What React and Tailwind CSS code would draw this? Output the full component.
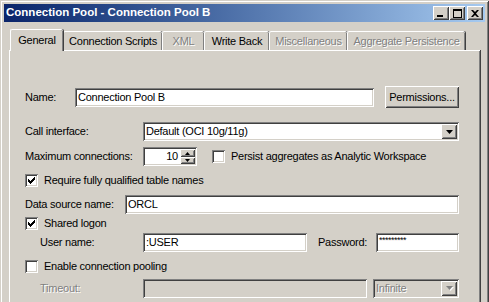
import React from 'react';

// bevels in the classic Windows style
const sunken = "shadow-[inset_1px_1px_0_#808080,inset_-1px_-1px_0_#ffffff,inset_2px_2px_0_#404040,inset_-2px_-2px_0_#d4d0c8]";
const raised = "shadow-[inset_1px_1px_0_#ffffff,inset_-1px_-1px_0_#404040,inset_2px_2px_0_#d4d0c8,inset_-2px_-2px_0_#808080]";
const grayText = "text-[#808080] [text-shadow:1px_1px_0_#ffffff]";

const Arrow = ({ disabled }) => (
  <svg width="7" height="4" viewBox="0 0 7 4" className="overflow-visible">
    {disabled && <polygon points="1,1 8,1 4.5,5" fill="#ffffff" />}
    <polygon points="0,0 7,0 3.5,4" fill={disabled ? "#808080" : "#000000"} />
  </svg>
);

const DropButton = ({ disabled }) => (
  <div className={`w-[16px] h-[15px] bg-[#d4d0c8] flex items-center justify-center ${raised}`}>
    <Arrow disabled={disabled} />
  </div>
);

const Field = ({ w, children, disabled, className = "" }) => (
  <div className={`${w} h-[19px] ${disabled ? "bg-[#d4d0c8]" : "bg-white"} ${sunken} flex items-center pl-[3px] shrink-0 ${className}`}>
    {children}
  </div>
);

const Select = ({ w, value, disabled }) => (
  <div className={`${w} h-[19px] ${disabled ? "bg-[#d4d0c8]" : "bg-white"} ${sunken} flex items-center pl-[3px] pr-[2px] shrink-0`}>
    <span className={`flex-1 ${disabled ? grayText : ""}`}>{value}</span>
    <DropButton disabled={disabled} />
  </div>
);

const Checkbox = ({ checked }) => (
  <div className={`w-[13px] h-[13px] bg-white ${sunken} shrink-0 flex items-center justify-center`}>
    {checked && (
      <svg width="7" height="7" viewBox="0 0 7 7">
        <path d="M0 2h1v1h1v1h1v-1h1v-1h1v-1h1v-1h1v3h-1v1h-1v1h-1v1h-1v1h-1v-1h-1v-1h-1v-1h-1z" fill="#000" />
      </svg>
    )}
  </div>
);

const TitleButton = ({ children }) => (
  <div className={`w-[16px] h-[14px] bg-[#d4d0c8] ${raised} flex items-center justify-center`}>
    {children}
  </div>
);

const Tab = ({ w, label, selected, disabled }) => (
  <div
    className={`${w} shrink-0 flex items-center justify-center bg-[#d4d0c8] border-t border-l border-white rounded-t-[2px] shadow-[1px_0_0_#404040,inset_-1px_0_0_#808080] ${
      selected ? "h-[22px] relative z-10 -mb-[1px] pb-[1px]" : "h-[19px] pt-[1px]"
    } ${disabled ? grayText : "text-black"}`}
  >
    {label}
  </div>
);

const tabs = [
  { label: "General", w: "w-[53px]", selected: true },
  { label: "Connection Scripts", w: "w-[99px]" },
  { label: "XML", w: "w-[42px]", disabled: true },
  { label: "Write Back", w: "w-[65px]" },
  { label: "Miscellaneous", w: "w-[78px]", disabled: true },
  { label: "Aggregate Persistence", w: "w-[118px]", disabled: true },
];

export default function App() {
  return (
    <div className="w-[489px] h-[302px] overflow-hidden bg-[#d4d0c8] font-['Liberation_Sans',Arial,sans-serif] text-[11px] tracking-[-0.25px] text-black leading-none">
      {/* fenêtre */}
      <div className="w-[489px] h-[320px] px-[4px] pt-[4px] shadow-[inset_1px_1px_0_#d4d0c8,inset_-1px_-1px_0_#404040,inset_2px_2px_0_#ffffff,inset_-2px_-2px_0_#808080]">
        {/* barre de titre */}
        <div className="h-[18px] bg-linear-to-r from-[#0a246a] to-[#a6caf0] flex items-center pl-[2px] pr-[2px]">
          <span className="flex-1 text-white font-bold text-[11.5px] tracking-normal">Connection Pool - Connection Pool B</span>
          <div className="flex items-center">
            <TitleButton>
              <div className="w-[6px] h-[2px] bg-black mt-[6px] -ml-[2px]" />
            </TitleButton>
            <TitleButton>
              <div className="w-[9px] h-[9px] border border-black border-t-2" />
            </TitleButton>
            <div className="ml-[2px]">
              <TitleButton>
                <svg width="8" height="7" viewBox="0 0 8 7">
                  <path d="M0 0h2l2 2 2-2h2l-3 3.5 3 3.5h-2l-2-2-2 2h-2l3-3.5z" fill="#000" />
                </svg>
              </TitleButton>
            </div>
          </div>
        </div>

        {/* onglets */}
        <div className="mt-[7px] h-[21px] flex items-end pl-[6px]">
          {tabs.map((t) => (
            <Tab key={t.label} {...t} />
          ))}
        </div>

        {/* panneau */}
        <div className="ml-[5px] w-[471px] h-[300px] border-t border-l border-white shadow-[1px_0_0_#404040,inset_-1px_0_0_#808080] pl-[15px] pt-[35px]">
          {/* Name */}
          <div className="flex items-center h-[22px]">
            <span className="w-[50px]">Name:</span>
            <Field w="w-[299px]">Connection Pool B</Field>
            <div className={`ml-[11px] w-[74px] h-[22px] ${raised} flex items-center justify-center`}>
              Permissions...
            </div>
          </div>

          {/* Call interface */}
          <div className="flex items-center h-[19px] mt-[14px]">
            <span className="w-[118px]">Call interface:</span>
            <Select w="w-[316px]" value="Default (OCI 10g/11g)" />
          </div>

          {/* Maximum connections */}
          <div className="flex items-center h-[19px] mt-[6px]">
            <span className="w-[118px]">Maximum connections:</span>
            <div className={`w-[54px] h-[19px] bg-white ${sunken} flex items-center pr-[2px] shrink-0`}>
              <span className="flex-1 text-right pr-[2px]">10</span>
              <div className="flex flex-col w-[15px] h-[15px]">
                <div className={`h-[8px] bg-[#d4d0c8] ${raised} flex items-center justify-center`}>
                  <svg width="5" height="3" viewBox="0 0 5 3"><polygon points="2.5,0 5,3 0,3" fill="#000" /></svg>
                </div>
                <div className={`h-[7px] bg-[#d4d0c8] ${raised} flex items-center justify-center`}>
                  <svg width="5" height="3" viewBox="0 0 5 3"><polygon points="0,0 5,0 2.5,3" fill="#000" /></svg>
                </div>
              </div>
            </div>
            <div className="ml-[15px]">
              <Checkbox />
            </div>
            <span className="ml-[6px]">Persist aggregates as Analytic Workspace</span>
          </div>

          {/* Require */}
          <div className="flex items-center h-[13px] mt-[8px]">
            <Checkbox checked />
            <span className="ml-[6px]">Require fully qualified table names</span>
          </div>

          {/* Data source */}
          <div className="flex items-center h-[19px] mt-[8px]">
            <span className="w-[100px]">Data source name:</span>
            <Field w="w-[334px]">ORCL</Field>
          </div>

          {/* Shared logon */}
          <div className="flex items-center h-[13px] mt-[3px]">
            <Checkbox checked />
            <span className="ml-[6px]">Shared logon</span>
          </div>

          {/* User / Password */}
          <div className="flex items-center h-[19px] mt-[3px] pl-[15px]">
            <span className="w-[103px]">User name:</span>
            <Field w="w-[164px]">:USER</Field>
            <span className="ml-[11px] w-[58px]">Password:</span>
            <Field w="w-[83px]" className="items-start pt-[3px]">
              <span className="text-[9px] tracking-[-0.5px]">*********</span>
            </Field>
          </div>

          {/* Enable pooling */}
          <div className="flex items-center h-[13px] mt-[8px]">
            <Checkbox />
            <span className="ml-[6px]">Enable connection pooling</span>
          </div>

          {/* Timeout */}
          <div className="flex items-center h-[20px] mt-[5px] pl-[15px]">
            <span className={`w-[103px] ${grayText}`}>Timeout:</span>
            <Field w="w-[224px]" disabled />
            <div className="ml-[6px]">
              <Select w="w-[86px]" value="Infinite" disabled />
            </div>
          </div>
        </div>
      </div>
    </div>
  );
}
